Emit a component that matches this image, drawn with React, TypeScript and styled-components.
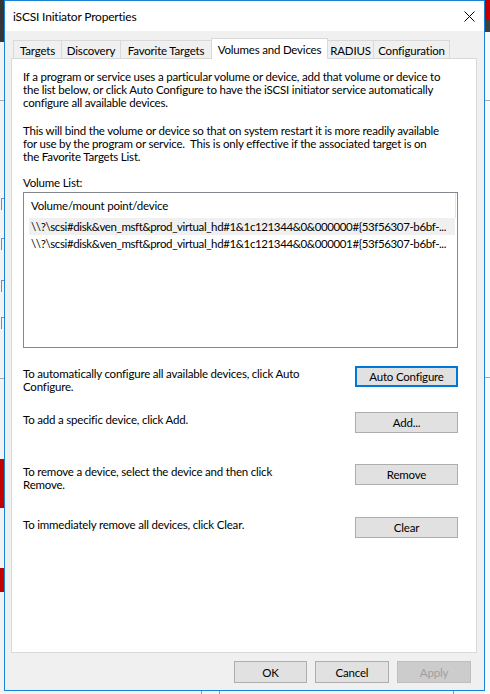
import styled, { createGlobalStyle } from "styled-components";

const GlobalStyle = createGlobalStyle`
  html, body {
    margin: 0;
    padding: 0;
    background: #f3f3f3;
  }
  body {
    font-family: "Segoe UI", Lato, "Noto Sans", sans-serif;
    font-size: 11.5px;
    letter-spacing: -0.2px;
    color: #000;
  }
`;

const Desktop = styled.div`
  width: 490px;
  height: 694px;
  overflow: hidden;
  display: grid;
  grid-template-columns: 4px 481px 5px;
  grid-template-rows: 691px 3px;
  background: #f3f3f3;
`;

const EdgeStrip = styled.div<{ $col: number }>`
  grid-column: ${(p) => p.$col};
  grid-row: 1 / 3;
  display: flex;
  flex-direction: column;
  overflow: hidden;
`;

const Segment = styled.div<{ $h: number; $bg?: string }>`
  flex: 0 0 ${(p) => p.$h}px;
  background: ${(p) => p.$bg || "transparent"};
  overflow: hidden;
`;

const Glyph = styled.div`
  width: 3px;
  margin-left: 1px;
  height: 12px;
  border-left: 1px solid #3d7cc9;
  border-top: 1px solid #3d7cc9;
  box-sizing: border-box;
  opacity: 0.8;
`;

const BottomStrip = styled.div`
  grid-column: 2;
  grid-row: 2;
  display: flex;
  align-items: stretch;
`;

const Tick = styled.span<{ $ml: number }>`
  width: 1px;
  margin-left: ${(p) => p.$ml}px;
  background: #9a9a9a;
`;

const Window = styled.div`
  grid-column: 2;
  grid-row: 1;
  border: 1px solid #1883d7;
  background: #f0f0f0;
  display: flex;
  flex-direction: column;
`;

const TitleBar = styled.div`
  height: 30px;
  background: #fff;
  display: flex;
  align-items: center;
  justify-content: space-between;
  padding: 0 9px 0 8px;
  font-size: 12px;
`;

const Body = styled.div`
  padding: 7px 7px 0 6px;
  display: flex;
  flex-direction: column;
`;

const TabStrip = styled.div`
  height: 21px;
  margin-bottom: -1px;
  padding-left: 2px;
  display: flex;
  align-items: flex-end;
  position: relative;
  z-index: 1;
`;

const Tab = styled.div<{ $w: number; $active?: boolean }>`
  box-sizing: border-box;
  width: ${(p) => p.$w}px;
  height: ${(p) => (p.$active ? 21 : 18)}px;
  margin-bottom: ${(p) => (p.$active ? 0 : 1)}px;
  margin-left: -1px;
  padding-top: ${(p) => (p.$active ? 0 : 1)}px;
  border: 1px solid #d9d9d9;
  border-bottom: none;
  background: ${(p) => (p.$active ? "#fff" : "#f0f0f0")};
  position: relative;
  z-index: ${(p) => (p.$active ? 2 : 1)};
  display: flex;
  align-items: center;
  justify-content: center;
  white-space: nowrap;

  &:first-child {
    margin-left: 0;
  }
`;

const Panel = styled.div`
  box-sizing: border-box;
  height: 595px;
  background: #fff;
  border: 1px solid #d9d9d9;
  padding: 11px 18px 0 11px;
  display: flex;
  flex-direction: column;
`;

const Para = styled.div<{ $mt?: number }>`
  margin-top: ${(p) => p.$mt || 0}px;
  line-height: 13px;
  white-space: pre;
`;

const ListBox = styled.div`
  box-sizing: border-box;
  margin-top: 3px;
  height: 156px;
  border: 1px solid #828790;
  background: #fff;
  display: flex;
  flex-direction: column;
`;

const ListHeader = styled.div`
  box-sizing: border-box;
  width: 432px;
  height: 25px;
  padding-left: 7px;
  border-right: 1px solid #e5e5e5;
  display: flex;
  align-items: center;
`;

const ListRow = styled.div<{ $hover?: boolean }>`
  margin-left: 5px;
  width: 426px;
  height: 17px;
  line-height: 17px;
  padding-left: 2px;
  box-sizing: border-box;
  letter-spacing: -0.38px;
  background: ${(p) => (p.$hover ? "#f0f0f0" : "transparent")};
  white-space: nowrap;
  overflow: hidden;
  text-overflow: ellipsis;
`;

const Actions = styled.div`
  margin-top: 18px;
  display: grid;
  grid-template-columns: 1fr 103px;
  grid-template-rows: 46px 52px 53px auto;
`;

const ActionText = styled.div`
  padding-top: 1px;
  line-height: 13px;
  white-space: nowrap;
`;

const Button = styled.div<{ $w?: number; $h?: number; $focused?: boolean; $disabled?: boolean }>`
  box-sizing: border-box;
  width: ${(p) => p.$w || 103}px;
  height: ${(p) => p.$h || 21}px;
  background: ${(p) => (p.$disabled ? "#cccccc" : "#e1e1e1")};
  border: ${(p) =>
    p.$focused ? "2px solid #0078d7" : `1px solid ${p.$disabled ? "#bfbfbf" : "#adadad"}`};
  color: ${(p) => (p.$disabled ? "#a0a0a0" : "#000")};
  display: flex;
  align-items: center;
  justify-content: center;
  white-space: nowrap;
`;

const Footer = styled.div`
  margin-top: 8px;
  padding-right: 6px;
  display: flex;
  justify-content: flex-end;
  gap: 8px;
`;

function CloseIcon() {
  return (
    <svg width="11" height="11" viewBox="0 0 11 11">
      <path d="M0.5 0.5 L10.5 10.5 M10.5 0.5 L0.5 10.5" stroke="#000" strokeWidth="1" />
    </svg>
  );
}

const tabs = [
  { label: "Targets", w: 49 },
  { label: "Discovery", w: 60 },
  { label: "Favorite Targets", w: 92 },
  { label: "Volumes and Devices", w: 117, active: true },
  { label: "RADIUS", w: 47 },
  { label: "Configuration", w: 77 },
];

const devices = [
  "\\\\?\\scsi#disk&ven_msft&prod_virtual_hd#1&1c121344&0&000000#{53f56307-b6bf-...",
  "\\\\?\\scsi#disk&ven_msft&prod_virtual_hd#1&1c121344&0&000001#{53f56307-b6bf-...",
];

export default function App() {
  return (
    <>
      <GlobalStyle />
      <Desktop>
        <EdgeStrip $col={1}>
          <Segment $h={42} $bg="#363636" />
          <Segment $h={58} />
          <Segment $h={1} $bg="#a9a9a9" />
          <Segment $h={97} />
          <Segment $h={12}><Glyph /></Segment>
          <Segment $h={28} />
          <Segment $h={12}><Glyph /></Segment>
          <Segment $h={30} />
          <Segment $h={12}><Glyph /></Segment>
          <Segment $h={25} />
          <Segment $h={12}><Glyph /></Segment>
          <Segment $h={49} />
          <Segment $h={1} $bg="#a9a9a9" />
          <Segment $h={80} />
          <Segment $h={49} $bg="#c50000" />
          <Segment $h={60} />
          <Segment $h={24} $bg="#c50000" />
        </EdgeStrip>

        <Window>
          <TitleBar>
            <span>iSCSI Initiator Properties</span>
            <CloseIcon />
          </TitleBar>
          <Body>
            <TabStrip>
              {tabs.map((t) => (
                <Tab key={t.label} $w={t.w} $active={t.active}>
                  {t.label}
                </Tab>
              ))}
            </TabStrip>
            <Panel>
              <Para>
                {"If a program or service uses a particular volume or device, add that volume or device to\n" +
                  "the list below, or click Auto Configure to have the iSCSI initiator service automatically\n" +
                  "configure all available devices."}
              </Para>
              <Para $mt={15}>
                {"This will bind the volume or device so that on system restart it is more readily available\n" +
                  "for use by the program or service.  This is only effective if the associated target is on\n" +
                  "the Favorite Targets List."}
              </Para>
              <Para $mt={13}>Volume List:</Para>
              <ListBox>
                <ListHeader>Volume/mount point/device</ListHeader>
                {devices.map((d, i) => (
                  <ListRow key={d} $hover={i === 0}>
                    {d}
                  </ListRow>
                ))}
              </ListBox>
              <Actions>
                <ActionText>
                  To automatically configure all available devices, click Auto
                  <br />
                  Configure.
                </ActionText>
                <Button $focused>Auto Configure</Button>
                <ActionText>To add a specific device, click Add.</ActionText>
                <Button>Add...</Button>
                <ActionText>
                  To remove a device, select the device and then click
                  <br />
                  Remove.
                </ActionText>
                <Button>Remove</Button>
                <ActionText>To immediately remove all devices, click Clear.</ActionText>
                <Button>Clear</Button>
              </Actions>
            </Panel>
            <Footer>
              <Button $w={73} $h={22}>OK</Button>
              <Button $w={74} $h={22}>Cancel</Button>
              <Button $w={74} $h={22} $disabled>Apply</Button>
            </Footer>
          </Body>
        </Window>

        <EdgeStrip $col={3}>
          <Segment $h={20} $bg="#c50000" />
          <Segment $h={12} $bg="#404040" />
          <Segment $h={68} $bg="#fafafa" />
          <Segment $h={1} $bg="#a9a9a9" />
          <Segment $h={276} $bg="#fafafa" />
          <Segment $h={1} $bg="#a9a9a9" />
          <Segment $h={316} $bg="#fafafa" />
        </EdgeStrip>

        <BottomStrip>
          <Tick $ml={197} />
          <Tick $ml={17} />
          <Tick $ml={233} />
        </BottomStrip>
      </Desktop>
    </>
  );
}
